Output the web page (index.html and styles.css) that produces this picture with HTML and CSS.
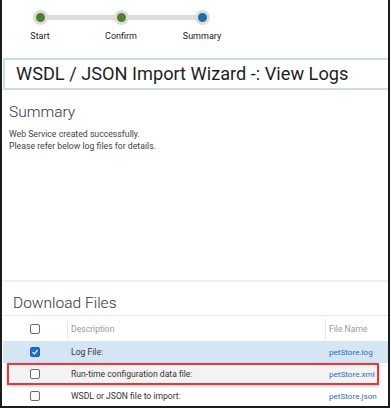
FILE: index.html
```html
<!DOCTYPE html>
<html lang="en">
<head>
    <meta charset="UTF-8">
    <meta name="viewport" content="width=device-width, initial-scale=1.0">
    <title>WSDL / JSON Import Wizard - View Logs</title>
    <link rel="stylesheet" href="styles.css">
</head>
<body>
    <div class="frame">
        <div class="steps">
            <div class="step done"><span class="dot"></span><span class="label">Start</span></div>
            <div class="bar"></div>
            <div class="step done"><span class="dot"></span><span class="label">Confirm</span></div>
            <div class="bar"></div>
            <div class="step current"><span class="dot"></span><span class="label">Summary</span></div>
        </div>

        <div class="title-bar">
            <h1>WSDL / JSON Import Wizard -: View Logs</h1>
        </div>

        <section class="summary">
            <h2>Summary</h2>
            <p>Web Service created successfully.<br>Please refer below log files for details.</p>
        </section>

        <section class="downloads">
            <h2>Download Files</h2>
            <div class="file-table">
                <div class="row head">
                    <div class="check-cell"><span class="checkbox"></span></div>
                    <div class="cell">Description</div>
                    <div class="cell">File Name</div>
                </div>
                <div class="row selected">
                    <div class="check-cell">
                        <span class="checkbox checked">
                            <svg viewBox="0 0 10 10" width="8" height="8"><path d="M2 5.2 L4.2 7.3 L8.2 2.6" fill="none" stroke="#fff" stroke-width="1.6"/></svg>
                        </span>
                    </div>
                    <div class="cell">Log File:</div>
                    <div class="cell file"><a href="#">petStore.log</a></div>
                </div>
                <div class="row highlight">
                    <div class="check-cell"><span class="checkbox"></span></div>
                    <div class="cell">Run-time configuration data file:</div>
                    <div class="cell file"><a href="#">petStore.xml</a></div>
                </div>
                <div class="row">
                    <div class="check-cell"><span class="checkbox"></span></div>
                    <div class="cell">WSDL or JSON file to import:</div>
                    <div class="cell file"><a href="#">petStore.json</a></div>
                </div>
            </div>
        </section>
    </div>
</body>
</html>
```

FILE: styles.css
```css
body {
    margin: 0;
    padding: 0;
    background: #fff;
    font-family: Roboto, 'Liberation Sans', sans-serif;
    color: #333;
}

.frame {
    width: 390px;
    height: 408px;
    box-sizing: border-box;
    border: 2px solid #1c1c1c;
    border-top: none;
    padding-left: 1px;
    overflow: hidden;
}

/* wizard steps */
.steps {
    display: flex;
    padding: 10px 0 0 12px;
}

.step {
    width: 50px;
    display: flex;
    flex-direction: column;
    align-items: center;
}

.dot {
    position: relative;
    z-index: 1;
    width: 9px;
    height: 9px;
    border: 3px solid #dcdcdc;
    border-radius: 50%;
    background: #4e7f30;
}

.step.current .dot {
    background: #1f6ea8;
}

.label {
    margin-top: 5px;
    font-size: 9px;
    line-height: 12px;
    color: #222;
}

.bar {
    flex: none;
    width: 71px;
    height: 5px;
    margin: 5px -20px 0;
    background: #dddddd;
}

/* title */
.title-bar {
    margin-top: 16px;
    height: 32px;
    box-sizing: border-box;
    border: 2px solid #cbdcec;
    border-right: none;
    display: flex;
    align-items: center;
}

.title-bar h1 {
    margin: 0;
    padding-left: 11px;
    font-size: 18.2px;
    font-weight: 400;
    color: #1e1e1e;
    line-height: 28px;
}

/* summary */
.summary {
    height: 190px;
    box-sizing: border-box;
    padding: 12px 0 0 6px;
}

.summary h2,
.downloads h2 {
    margin: 0;
    font-size: 15.5px;
    line-height: 20px;
    font-weight: 300;
    color: #333;
}

.summary p {
    margin: 6px 0 0;
    font-size: 8.7px;
    line-height: 12px;
    color: #444;
}

/* downloads */
.downloads {
    border-top: 2px solid #efefef;
}

.downloads h2 {
    margin: 11px 0 0 10px;
}

.file-table {
    margin-top: 2px;
    border-top: 1px solid #e6e6e6;
}

.row {
    position: relative;
    display: grid;
    grid-template-columns: 64px 258px 1fr;
    align-items: center;
    height: 22px;
    font-size: 8.6px;
    color: #333;
}

.row.head {
    height: 25px;
    color: #9a9a9a;
}

.row.head .cell {
    border-left: 1px solid #e6e6e6;
    height: 20px;
    padding-left: 3px;
    display: flex;
    align-items: center;
}

.row.selected {
    background: #d4e6f5;
}

.row.highlight::before {
    content: '';
    position: absolute;
    top: 0;
    bottom: 0;
    left: 4px;
    right: 9px;
    border: 2px solid #e03a3e;
    background: #f3f3f3;
    box-shadow: 0 1px 3px rgba(0, 0, 0, 0.25);
}

.row > div {
    position: relative;
}

.cell {
    padding-left: 4px;
    white-space: nowrap;
}

.cell.file {
    font-size: 8.1px;
}

.check-cell {
    display: flex;
    justify-content: center;
}

.checkbox {
    width: 10px;
    height: 10px;
    box-sizing: border-box;
    border: 1px solid #6c6c6c;
    border-radius: 2px;
    background: #fff;
    display: flex;
    align-items: center;
    justify-content: center;
}

.checkbox.checked {
    background: #1d6fd0;
    border-color: #1d5fb0;
}

.cell a {
    color: #2c6db3;
    text-decoration: none;
}
```
